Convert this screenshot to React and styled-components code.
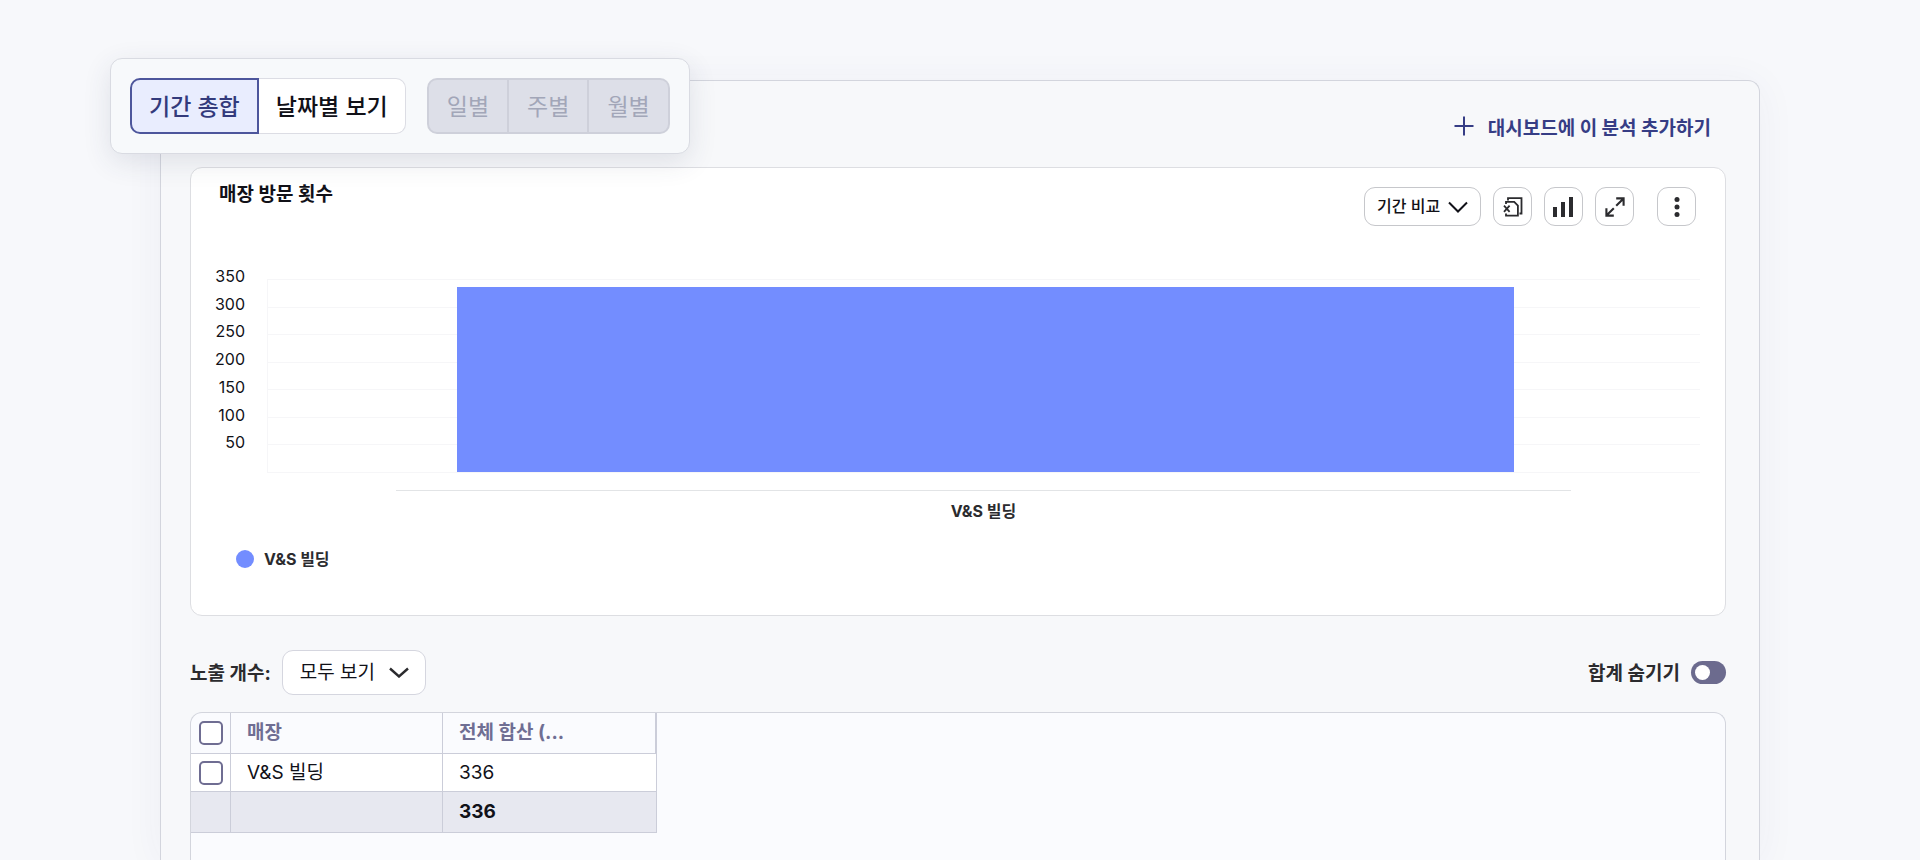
import React, { useState } from 'react'
import styled, { createGlobalStyle } from 'styled-components'

const GlobalStyle = createGlobalStyle`
  * {
    box-sizing: border-box;
  }
  body {
    margin: 0;
    background: #f7f8fb;
    color: #111118;
    font-family: Inter, 'Noto Sans CJK KR', sans-serif;
  }
  button,
  select,
  input {
    margin: 0;
    font-family: inherit;
  }
`

const Page = styled.main`
  display: flex;
  flex-direction: column;
  min-height: 100vh;
  padding: 80px 160px 0;
`

const Panel = styled.section`
  position: relative;
  display: flex;
  flex: 1;
  flex-direction: column;
  padding: 24px 33px 0 29px;
  border: 1px solid #d3d5dd;
  border-bottom: 0;
  border-radius: 12px 12px 0 0;
  background: #f7f8fa;
  box-shadow: 0 4px 40px rgba(60, 66, 110, 0.05);
`

const FloatingBar = styled.div`
  position: absolute;
  top: -23px;
  left: -51px;
  display: flex;
  gap: 21px;
  padding: 19px;
  border: 1px solid #d9dbe2;
  border-radius: 12px;
  background: #f7f9fb;
  box-shadow: 0 8px 28px rgba(50, 54, 90, 0.12);
`

const Segments = styled.div`
  display: flex;
`

const Segment = styled.button`
  height: 56px;
  padding: 0 17px 2px;
  border: 1px solid #dcdde4;
  border-left-width: 0;
  background: #fff;
  color: #111118;
  font-size: 23px;
  font-weight: 500;
  &:first-child {
    border-left-width: 1px;
    border-radius: 10px 0 0 10px;
  }
  &:last-child {
    border-radius: 0 10px 10px 0;
  }
  &[aria-pressed='true'] {
    border: 2px solid #4d569c;
    background: #e9edfe;
    color: #333a7c;
  }
  &:disabled {
    padding: 0 18px 2px;
    border: 2px solid #ced0da;
    background: #dddfe8;
    color: #a2a6b8;
    font-weight: 400;
  }
  &:disabled + &:disabled {
    border-left-width: 0;
  }
`

const AddRow = styled.div`
  display: flex;
  justify-content: flex-end;
  padding-right: 15px;
`

const AddLink = styled.a`
  display: flex;
  align-items: center;
  gap: 14px;
  height: 42px;
  color: #363d85;
  font-size: 19px;
  font-weight: 700;
  text-decoration: none;
`

const Card = styled.section`
  margin-top: 20px;
  padding: 19px 29px 0 28px;
  height: 449px;
  border: 1px solid #dddee2;
  border-radius: 12px;
  background: #fff;
`

const CardHeader = styled.header`
  display: flex;
  align-items: flex-start;
  justify-content: space-between;
`

const CardTitle = styled.h2`
  margin: 0;
  font-size: 19px;
  font-weight: 700;
  line-height: 16px;
`

const Tools = styled.div`
  display: flex;
  gap: 12px;
`

const IconButton = styled.button`
  display: grid;
  place-items: center;
  width: 39px;
  height: 39px;
  padding: 0;
  margin-left: ${({ $apart }) => ($apart ? '11px' : '0')};
  border: 1px solid #c6c7cb;
  border-radius: 11px;
  background: #fff;
  color: #2b2b2e;
`

const SelectWrap = styled.div`
  display: grid;
  align-items: center;
  > * {
    grid-area: 1 / 1;
  }
  svg {
    justify-self: end;
    margin-right: ${({ $large }) => ($large ? '17px' : '13px')};
    pointer-events: none;
  }
`

const Select = styled.select`
  appearance: none;
  width: ${({ $large }) => ($large ? '144px' : '117px')};
  height: ${({ $large }) => ($large ? '45px' : '39px')};
  padding: ${({ $large }) => ($large ? '0 40px 1px 17px' : '0 36px 1px 12px')};
  border: 1px solid ${({ $large }) => ($large ? '#d5d6df' : '#c6c7cb')};
  border-radius: 11px;
  background: #fff;
  color: #111118;
  font-size: ${({ $large }) => ($large ? '19px' : '16px')};
  font-weight: ${({ $large }) => ($large ? 400 : 500)};
`

const Chart = styled.div`
  display: grid;
  grid-template-columns: 26px 1fr;
  column-gap: 22px;
  margin: 53px -4px 0 0;
`

const YAxis = styled.div`
  display: flex;
  flex-direction: column;
  align-items: flex-end;
  height: 194px;
  margin-top: -3px;
`

const Tick = styled.span`
  flex: 1;
  font-size: 16px;
  line-height: 1px;
`

const Plot = styled.div`
  position: relative;
  display: flex;
  flex-direction: column;
  height: 194px;
  border: solid #f6f6f8;
  border-width: 0 0 1px 1px;
`

const GridLine = styled.div`
  flex: 1;
  border-top: 1px solid #f6f6f8;
`

const Bar = styled.div`
  position: absolute;
  right: 13%;
  bottom: 0;
  left: 13.2%;
  background: #738dff;
`

const XAxis = styled.div`
  grid-column: 2;
  margin: 17px 9% 0;
  padding-top: 10px;
  border-top: 1px solid #e2e4e6;
  color: #2b2b2e;
  font-size: 16px;
  font-weight: 700;
  line-height: 20px;
  text-align: center;
`

const Legend = styled.div`
  display: flex;
  align-items: center;
  gap: 10px;
  margin: 28px 0 0 17px;
  color: #2b2b2e;
  font-size: 16px;
  font-weight: 700;
  line-height: 20px;
  &::before {
    width: 18px;
    height: 18px;
    border-radius: 50%;
    background: #738dff;
    content: '';
  }
`

const Controls = styled.div`
  display: flex;
  align-items: center;
  justify-content: space-between;
  margin: 34px 0 17px;
`

const Field = styled.div`
  display: flex;
  align-items: center;
  gap: 11px;
  color: #2b2b2e;
  font-size: 19px;
  font-weight: 700;
  label {
    padding-bottom: 2px;
  }
`

const Switch = styled.input`
  appearance: none;
  display: flex;
  align-items: center;
  width: 35px;
  height: 23px;
  padding: 0 4px;
  border-radius: 12px;
  background: #6c6b8e;
  &::before {
    width: 15px;
    height: 15px;
    border-radius: 50%;
    background: #fff;
    content: '';
  }
  &:checked {
    justify-content: flex-end;
    background: #738dff;
  }
`

const TableBox = styled.div`
  flex: 1;
  overflow: hidden;
  border: 1px solid #d3d5dd;
  border-bottom: 0;
  border-radius: 12px 12px 0 0;
  background: #fafbfe;
`

const Table = styled.table`
  width: 466px;
  table-layout: fixed;
  border-collapse: separate;
  border-spacing: 0;
  font-size: 19px;
  th,
  td {
    padding: 0 16px;
    border: solid #cbcdd9;
    border-width: 0 1px 1px 0;
    overflow: hidden;
    text-align: left;
    text-overflow: ellipsis;
    white-space: nowrap;
    line-height: 24px;
  }
  th {
    color: #6f6e93;
    font-weight: 700;
  }
  th:first-child,
  td:first-child {
    width: 40px;
    padding: 0 0 0 8px;
  }
  th:nth-child(2) {
    width: 212px;
  }
  th:last-child {
    border-right-width: 2px;
  }
  thead th,
  tfoot td {
    height: 41px;
  }
  tbody td {
    height: 38px;
    background: #fff;
  }
  tfoot td {
    background: #e7e8f0;
    font-weight: 700;
  }
`

const Checkbox = styled.input`
  appearance: none;
  display: block;
  width: 24px;
  height: 24px;
  border: 2px solid #6f6d92;
  border-radius: 5px;
  background: #fff;
  &:checked {
    background: #6f6d92;
  }
`

const PlusIcon = () => (
  <svg width="20" height="20" viewBox="0 0 20 20" fill="none" stroke="currentColor" strokeWidth="2">
    <path d="M10 .5v19M.5 10h19" />
  </svg>
)

const Chevron = ({ weight, height }) => (
  <svg width="20" height={height} viewBox={`0 0 20 ${height}`} fill="none" stroke="currentColor" strokeWidth={weight}>
    <path d={`M1 1.5l9 ${height - 3}l9-${height - 3}`} />
  </svg>
)

const ExcelIcon = () => (
  <svg width="20" height="20" viewBox="0 0 20 20" fill="none" stroke="currentColor" strokeWidth="1.8">
    <path d="M5 3.5V1.2h13.5v15.3H16.5" />
    <path d="M3 7V4.9h8.2l3.7 3.7v10H3v-2.2" />
    <path d="M1 8.6l5.6 6.2M6.6 8.6L1 14.8" />
  </svg>
)

const BarsIcon = () => (
  <svg width="21" height="20" viewBox="0 0 21 20" fill="currentColor">
    <path d="M0 10h4v10H0zM8 5h4v15H8zM16 0h4v20h-4z" />
  </svg>
)

const ExpandIcon = () => (
  <svg width="20" height="20" viewBox="0 0 20 20" fill="none" stroke="currentColor" strokeWidth="2.1">
    <path d="M11.2 1.4h7.4v7.4M18.6 1.4l-7.4 7.4M1.4 11.2v7.4h7.4M1.4 18.6l7.4-7.4" />
  </svg>
)

const MoreIcon = () => (
  <svg width="6" height="20" viewBox="0 0 6 20" fill="currentColor">
    <circle cx="3" cy="2.5" r="2.5" />
    <circle cx="3" cy="10" r="2.5" />
    <circle cx="3" cy="17.5" r="2.5" />
  </svg>
)

const ticks = [350, 300, 250, 200, 150, 100, 50]
const store = { name: 'V&S 빌딩', visits: 336 }

const App = () => {
  const [view, setView] = useState('기간 총합')

  return (
    <>
      <GlobalStyle />
      <Page>
        <Panel>
          <AddRow>
            <AddLink href="#dashboard">
              <PlusIcon />
              대시보드에 이 분석 추가하기
            </AddLink>
          </AddRow>

          <Card>
            <CardHeader>
              <CardTitle>매장 방문 횟수</CardTitle>
              <Tools>
                <SelectWrap>
                  <Select aria-label="기간 비교">
                    <option>기간 비교</option>
                  </Select>
                  <Chevron weight="2" height={12} />
                </SelectWrap>
                <IconButton aria-label="엑셀 다운로드"><ExcelIcon /></IconButton>
                <IconButton aria-label="차트 종류"><BarsIcon /></IconButton>
                <IconButton aria-label="확대"><ExpandIcon /></IconButton>
                <IconButton aria-label="더보기" $apart><MoreIcon /></IconButton>
              </Tools>
            </CardHeader>
            <Chart>
              <YAxis>
                {ticks.map(tick => <Tick key={tick}>{tick}</Tick>)}
              </YAxis>
              <Plot>
                {ticks.map(tick => <GridLine key={tick} />)}
                <Bar style={{ height: `${(store.visits / ticks[0]) * 100}%` }} />
              </Plot>
              <XAxis>{store.name}</XAxis>
            </Chart>
            <Legend>{store.name}</Legend>
          </Card>

          <Controls>
            <Field>
              <label htmlFor="count">노출 개수:</label>
              <SelectWrap $large>
                <Select id="count" $large>
                  <option>모두 보기</option>
                </Select>
                <Chevron weight="2.4" height={11} />
              </SelectWrap>
            </Field>
            <Field>
              <label htmlFor="hide-total">합계 숨기기</label>
              <Switch id="hide-total" type="checkbox" role="switch" />
            </Field>
          </Controls>

          <TableBox>
            <Table>
              <thead>
                <tr>
                  <th><Checkbox type="checkbox" aria-label="전체 선택" /></th>
                  <th>매장</th>
                  <th>전체 합산 (...</th>
                </tr>
              </thead>
              <tbody>
                <tr>
                  <td><Checkbox type="checkbox" aria-label={store.name} /></td>
                  <td>{store.name}</td>
                  <td>{store.visits}</td>
                </tr>
              </tbody>
              <tfoot>
                <tr>
                  <td />
                  <td />
                  <td>{store.visits}</td>
                </tr>
              </tfoot>
            </Table>
          </TableBox>

          <FloatingBar>
            <Segments>
              {['기간 총합', '날짜별 보기'].map(name => (
                <Segment key={name} aria-pressed={view === name} onClick={() => setView(name)}>
                  {name}
                </Segment>
              ))}
            </Segments>
            <Segments>
              {['일별', '주별', '월별'].map(name => (
                <Segment key={name} disabled>{name}</Segment>
              ))}
            </Segments>
          </FloatingBar>
        </Panel>
      </Page>
    </>
  )
}

export default App
